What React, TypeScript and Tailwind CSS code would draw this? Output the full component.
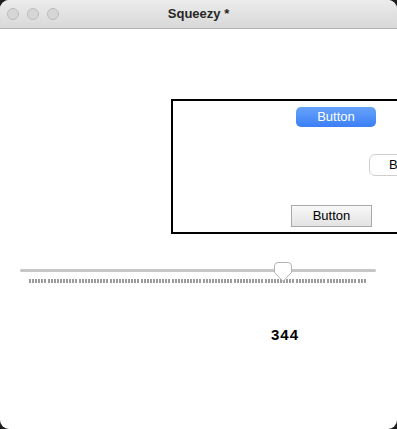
import React from 'react';

function TrafficLight() {
    return <div className="h-3 w-3 rounded-full border border-[#bcbcbc] bg-[#d6d6d6]" />;
}

function Thumb() {
    return (
        <svg width="18" height="20" viewBox="0 0 18 20" className="block">
            <path
                d="M4 0.5 H14 A3.5 3.5 0 0 1 17.5 4 V10.5 L9 19.3 L0.5 10.5 V4 A3.5 3.5 0 0 1 4 0.5 Z"
                fill="#ffffff"
                stroke="#b4b4b4"
                strokeWidth="1"
            />
        </svg>
    );
}

export default function App() {
    return (
        <div className="h-[429px] w-[397px] bg-[#1e1e1e] font-['Liberation_Sans',Arial,sans-serif]">
            <div className="flex h-full w-full flex-col overflow-hidden rounded-[9px] bg-white">
                {/* title bar */}
                <div className="relative flex h-[29px] items-center border-b border-[#b2b2b2] bg-gradient-to-b from-[#ececec] to-[#d8d8d8]">
                    <div className="flex gap-2 pl-[7px]">
                        <TrafficLight />
                        <TrafficLight />
                        <TrafficLight />
                    </div>
                    <div className="absolute inset-x-0 text-center text-[13px] font-bold text-[#262626]">
                        Squeezy *
                    </div>
                </div>

                {/* content */}
                <div className="flex flex-col">
                    <div className="ml-[171px] mt-[70px] h-[135px] w-[240px] shrink-0 border-2 border-black">
                        <div className="ml-[123px] mt-[6px] flex h-[20px] w-[80px] items-center justify-center rounded-[5px] bg-gradient-to-b from-[#68a3fa] to-[#3b7ef6] text-[13px] text-white">
                            Button
                        </div>
                        <div className="ml-[196px] mt-[27px] flex h-[22px] w-[60px] items-center rounded-[6px] border border-[#cfcfcf] bg-white pl-[19px] text-[13px] text-black">
                            Button
                        </div>
                        <div className="ml-[118px] mt-[29px] flex h-[22px] w-[81px] items-center justify-center border border-[#a9a9a9] bg-gradient-to-b from-[#f8f8f8] to-[#e3e3e3] text-[13px] text-black">
                            Button
                        </div>
                    </div>

                    {/* slider */}
                    <div className="relative ml-[20px] mt-[35px] w-[356px]">
                        <div className="h-[3px] w-full rounded-full bg-[#c6c6c6]" />
                        <div className="ml-[9px] mt-[7px] h-[4px] w-[338px] bg-[repeating-linear-gradient(90deg,#9c9c9c_0_2px,transparent_2px_3.1px)]" />
                        <div className="absolute left-[254px] top-[-7px]">
                            <Thumb />
                        </div>
                    </div>

                    <div className="ml-[271px] mt-[43px] text-[15px] font-bold leading-[17px] tracking-[1px] text-black">344</div>
                </div>
            </div>
        </div>
    );
}
